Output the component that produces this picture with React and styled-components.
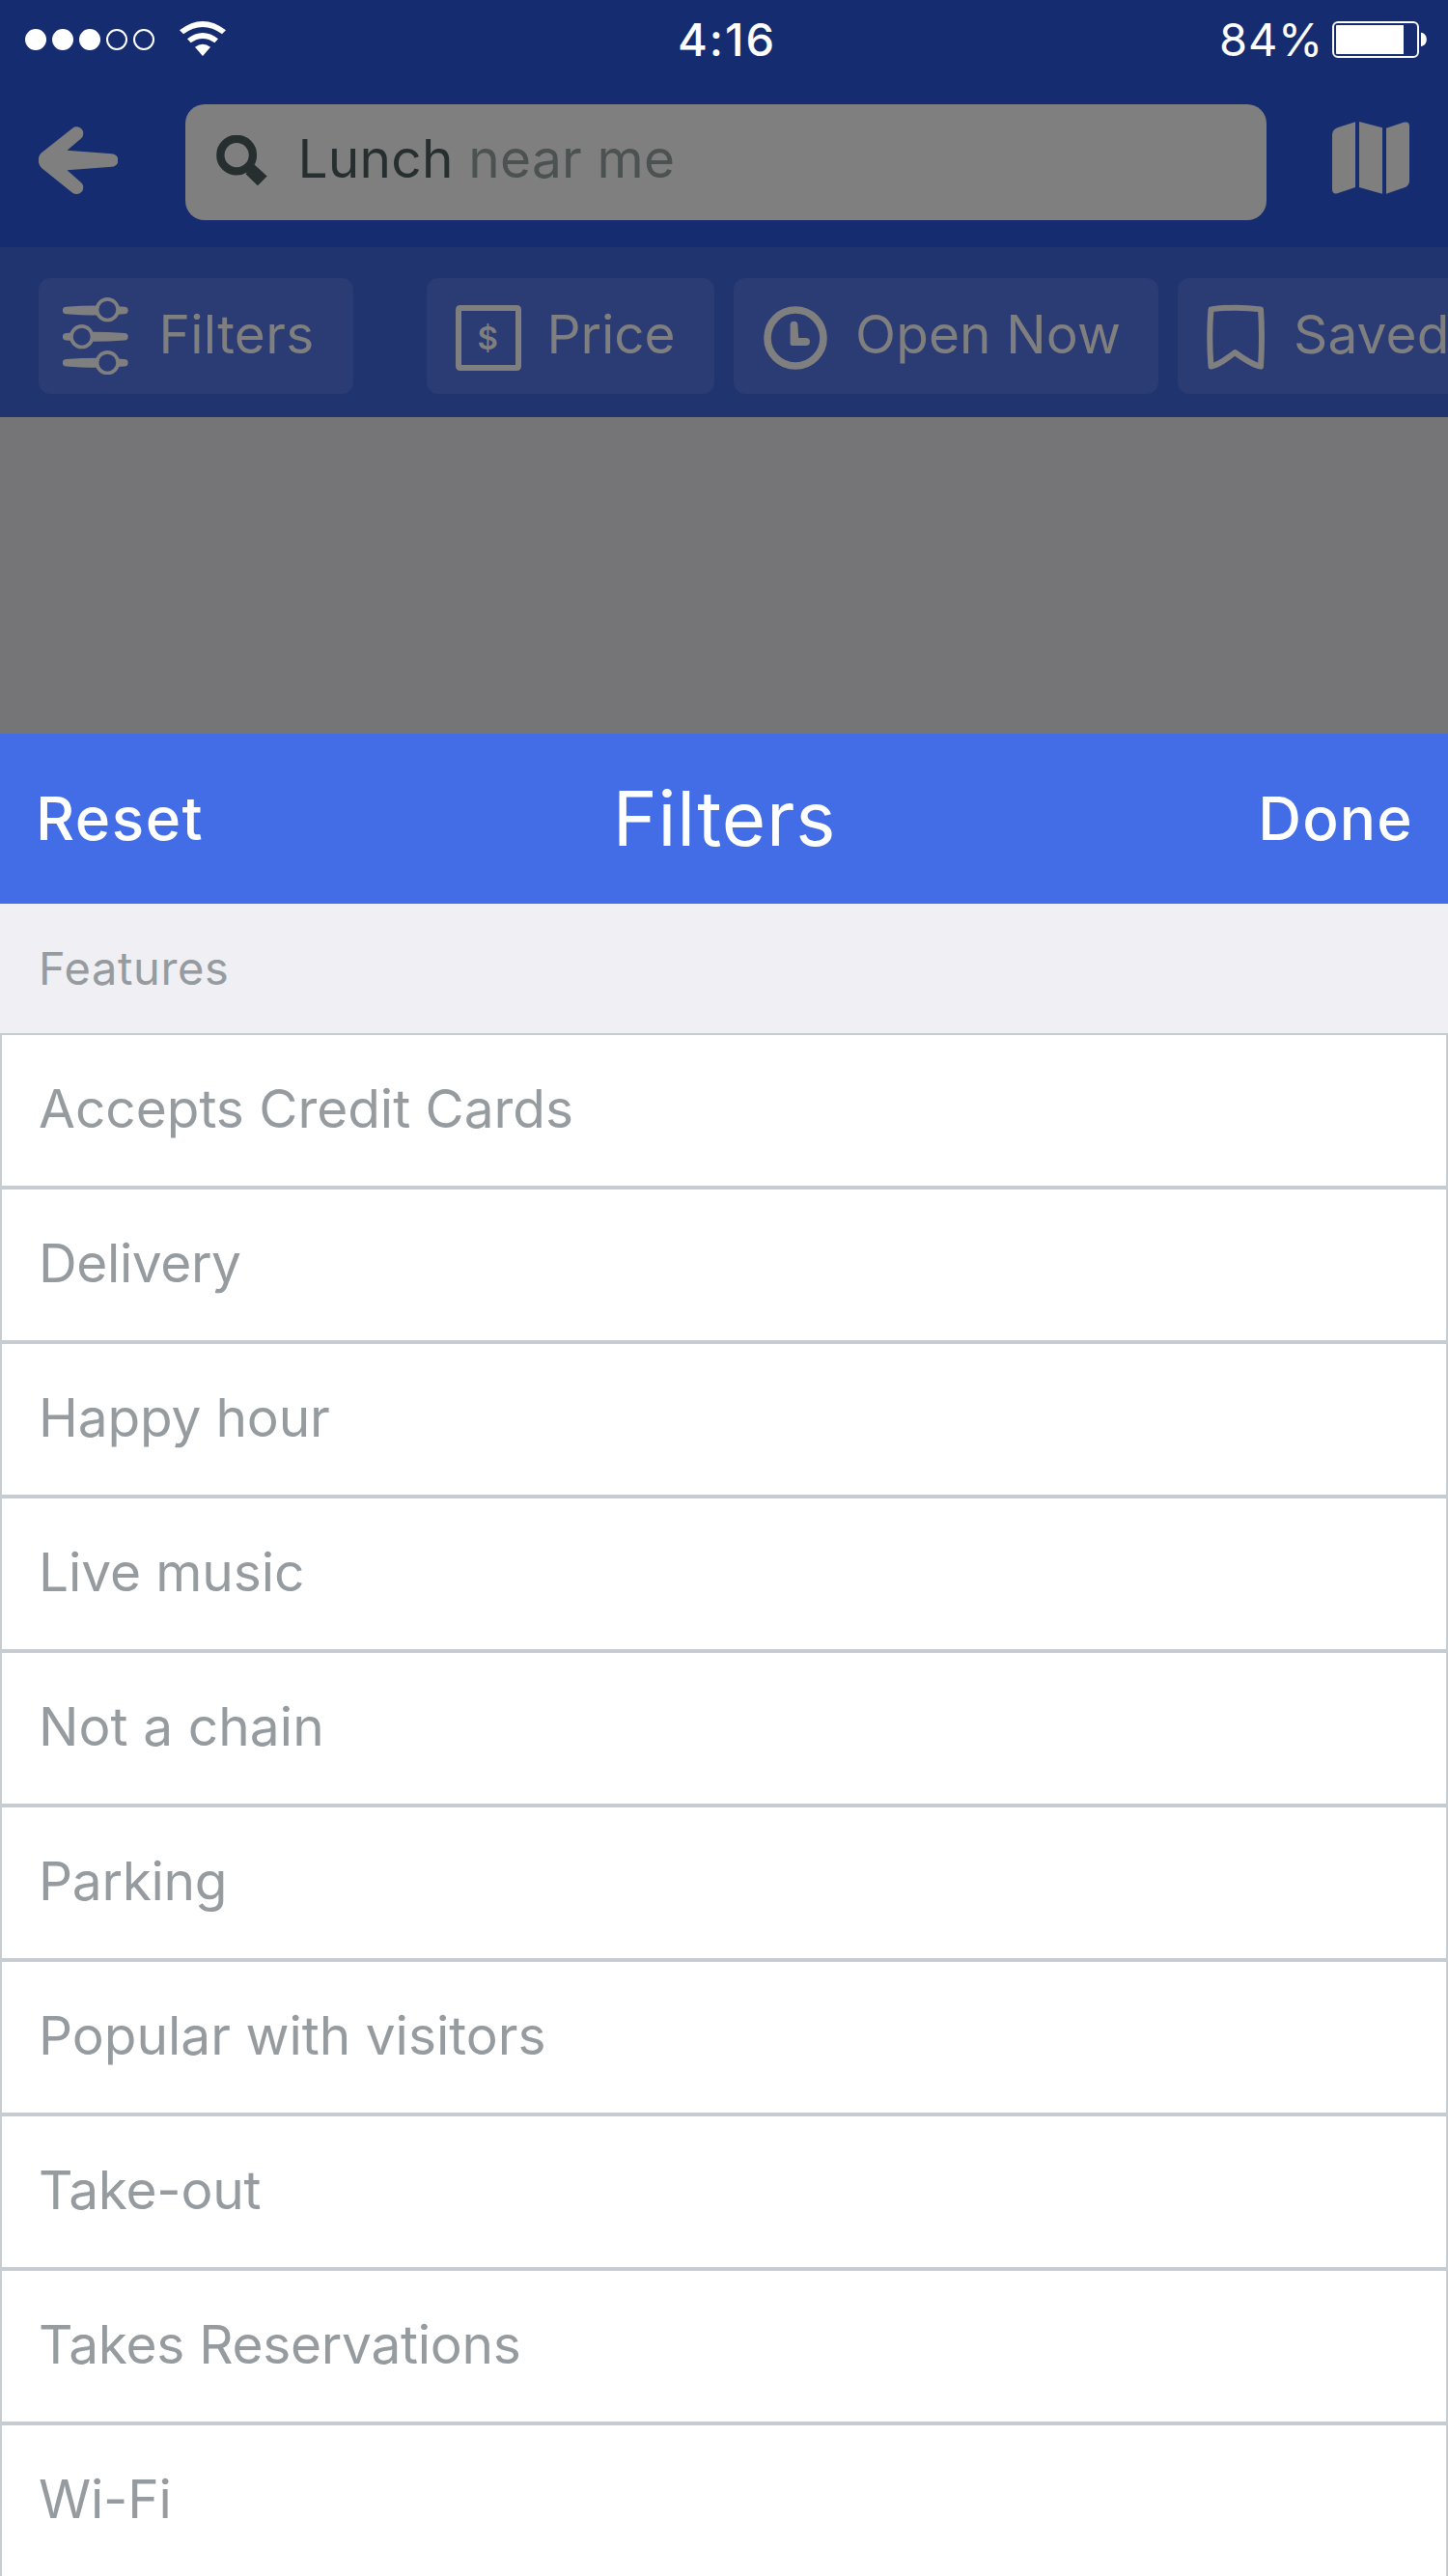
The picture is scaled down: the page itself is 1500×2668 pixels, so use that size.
import React from "react";
import styled, { createGlobalStyle } from "styled-components";

const color = {
  navy: "#162c70",
  navySoft: "#203470",
  chip: "#2b3b74",
  dimmed: "#7f7f7f",
  backdrop: "#757577",
  ink: "#272e2f",
  inkSoft: "#4c5251",
  primary: "#426de6",
  section: "#efeff4",
  label: "#959b9f",
  line: "#c6cccf",
};

const GlobalStyle = createGlobalStyle`
  *, *::before, *::after { box-sizing: border-box; }
  body { margin: 0; background: ${color.backdrop}; }
  button { font: inherit; color: inherit; border: 0; padding: 0; background: none; }
`;

const Screen = styled.div`
  width: 1500px;
  height: 2668px;
  overflow: hidden;
  display: flex;
  flex-direction: column;
  background: ${color.backdrop};
  font-family: Inter, "Liberation Sans", sans-serif;
`;

const Text = styled.span`
  font-size: ${(p) => p.$size || 55}px;
  font-weight: ${(p) => p.$weight || 400};
  letter-spacing: ${(p) => p.$tracking || 0}px;
  line-height: 1.2;
  white-space: pre;
`;

/* ---------- status bar ---------- */

const StatusBar = styled.div`
  flex: none;
  height: 82px;
  display: grid;
  grid-template-columns: 1fr auto 1fr;
  align-items: center;
  padding: 0 22px 0 26px;
  background: ${color.navy};
  color: #fff;
`;

const StatusLeft = styled.div`
  display: flex;
  align-items: center;
  gap: 26px;
`;

const Signal = styled.div`
  display: flex;
  gap: 6px;
`;

const Dot = styled.span`
  width: 22px;
  height: 22px;
  border-radius: 50%;
  border: 2px solid #fff;
  background: ${(p) => (p.$on ? "#fff" : "transparent")};
`;

const Clock = styled(Text)`
  padding-left: 2px;
`;

const WifiSvg = styled.svg`
  display: block;
  margin-bottom: 2px;
`;

const StatusRight = styled.div`
  display: flex;
  align-items: center;
  justify-content: flex-end;
  gap: 9px;
`;

/* ---------- search header ---------- */

const SearchHeader = styled.div`
  flex: none;
  height: 174px;
  display: flex;
  align-items: flex-start;
  padding: 26px 40px 0;
  background: ${color.navy};
`;

const IconButton = styled.button`
  display: flex;
  margin-top: ${(p) => p.$top}px;
`;

const SearchField = styled.div`
  width: 1120px;
  height: 120px;
  margin: 0 68px 0 70px;
  padding: 0 32px 8px;
  display: flex;
  align-items: center;
  gap: 31.5px;
  border-radius: 20px;
  background: ${color.dimmed};
  color: ${color.ink};
`;

const SearchSvg = styled.svg`
  flex: none;
  margin-top: 4px;
`;

const Soft = styled.span`
  color: ${color.inkSoft};
`;

/* ---------- filter chips ---------- */

const ChipBar = styled.div`
  flex: none;
  height: 176px;
  padding: 32px 0 0 40px;
  display: flex;
  align-items: flex-start;
  gap: 20px;
  overflow: hidden;
  background: ${color.navySoft};
`;

const Chip = styled.button`
  flex: none;
  width: ${(p) => p.$width}px;
  height: 120px;
  margin-right: ${(p) => (p.$lead ? 56 : 0)}px;
  padding-left: 25px;
  display: flex;
  align-items: center;
  gap: ${(p) => p.$gap}px;
  border-radius: 12px;
  background: ${color.chip};
  color: ${color.dimmed};
`;

const ChipText = styled(Text)`
  padding-bottom: 4px;
`;

const ChipSvg = styled.svg`
  flex: none;
  display: block;
`;

/* ---------- panel ---------- */

const Backdrop = styled.div`
  flex: none;
  height: 328px;
`;

const PanelHeader = styled.div`
  flex: none;
  height: 176px;
  padding: 0 36px 0 37px;
  display: grid;
  grid-template-columns: 1fr auto 1fr;
  align-items: center;
  background: ${color.primary};
  color: #fff;
`;

const Action = styled.button`
  justify-self: ${(p) => (p.$end ? "end" : "start")};
`;

const SectionTitle = styled.div`
  flex: none;
  height: 134px;
  padding-left: 40px;
  display: flex;
  align-items: center;
  background: ${color.section};
  color: ${color.label};
`;

const List = styled.div`
  flex: none;
  display: flex;
  flex-direction: column;
`;

const Row = styled.div`
  height: 160px;
  padding: 0 38px 4px;
  display: flex;
  align-items: center;
  border: 2px solid ${color.line};
  background: #fff;
  color: ${color.label};
`;

/* ---------- drawings ---------- */

const WifiIcon = () => (
  <WifiSvg width="48" height="36" viewBox="558 66 144 108" fill="#fff">
    <path d="M558 94Q630 38 702 94L690 106Q630 62 570 106Z" />
    <path d="M582 121Q630 83 678 121L667 133Q630 107 593 133Z" />
    <path d="M606 146Q630 128 654 146L630 174Z" />
  </WifiSvg>
);

const BatteryIcon = () => (
  <svg width="98" height="38" viewBox="0 0 98 38">
    <rect x="1" y="1" width="88" height="36" rx="5" fill="none" stroke="#fff" strokeWidth="2" />
    <path d="M5 4H74V34H5Q4 34 4 33V5Q4 4 5 4Z" fill="#fff" />
    <path d="M92 11.7C99.8 12.4 99.8 25.3 92 26Z" fill="#fff" />
  </svg>
);

const BackIcon = () => (
  <svg width="82" height="72" viewBox="120 389 247 215" fill={color.dimmed}>
    <path d="M128 474L226 396A21 21 0 0 1 254 427L209 466L348 476A20.5 20.5 0 0 1 348 517L209 527L254 567A21 21 0 0 1 226 598L130 521C116 508 116 487 128 474Z" />
  </svg>
);

const SearchIcon = () => (
  <SearchSvg width="53" height="53" viewBox="672 420 158 158">
    <circle cx="735" cy="481.5" r="50" fill="none" stroke={color.ink} strokeWidth="25" />
    <path d="M790 511L829 547L800 576L763 540Z" fill={color.ink} />
  </SearchSvg>
);

const MapIcon = () => (
  <svg width="80" height="75" viewBox="1140 378 240 225" fill={color.dimmed}>
    <path d="M1140 418Q1141 403 1156 397L1212 379V582L1156 601Q1140 604 1140 588Z" />
    <path d="M1224 378L1296 397V602L1224 582Z" />
    <path d="M1308 398L1362 380Q1380 376 1380 391V563Q1379 577 1364 583L1308 602Z" />
  </svg>
);

const SlidersIcon = () => (
  <ChipSvg width="76" height="80" viewBox="0 0 76 80" fill="currentColor">
    {[[12.7, 13.5, 46.3], [67.7, 67.7, 46.3]].map(([cy, y, cx]) => (
      <g key={cy} transform={`translate(0 ${y})`}>
        <path d="M3.6 -3.7Q18 -5 36 -5V5Q18 5 3.6 3.7A3.7 3.7 0 0 1 3.6 -3.7Z" />
        <path d="M57 -4.3L64 -3.7A3.7 3.7 0 0 1 64 3.7L57 4.3Z" />
        <circle cx={cx} cy={cy - y} r="10.8" fill={color.chip} stroke="currentColor" strokeWidth="3.7" />
      </g>
    ))}
    <g transform="translate(0 40.7)">
      <path d="M64 -3.7Q48 -5 30 -5V5Q48 5 64 3.7A3.7 3.7 0 0 0 64 -3.7Z" />
      <path d="M9 -4.3L3.6 -3.7A3.7 3.7 0 0 0 3.6 3.7L9 4.3Z" />
      <circle cx="19.7" cy="0" r="10.8" fill={color.chip} stroke="currentColor" strokeWidth="3.7" />
    </g>
  </ChipSvg>
);

const PriceIcon = () => (
  <ChipSvg width="76" height="80" viewBox="0 0 76 80">
    <path
      d="M10 8H68Q73 8 73 13V71Q73 76 68 76H10Q5 76 5 71V13Q5 8 10 8ZM11 14V70H67V14Z"
      fill="currentColor"
      fillRule="evenodd"
    />
    <text x="38.2" y="54" fontSize="33" fontWeight="600" textAnchor="middle" fill="currentColor">$</text>
  </ChipSvg>
);

const ClockIcon = () => (
  <ChipSvg width="77" height="80" viewBox="0 0 77 80">
    <circle cx="39" cy="42" r="29" fill="none" stroke="currentColor" strokeWidth="7.6" />
    <path
      d="M33.6 28.6A3.9 3.9 0 0 1 41.4 28.6L42.2 42H50A4 4 0 0 1 50 50H35.6Q33.6 50 33.6 48Z"
      fill="currentColor"
    />
  </ChipSvg>
);

const BookmarkIcon = () => (
  <ChipSvg width="71" height="80" viewBox="0 0 71 80">
    <path
      d="M9.5 12.4Q35 9 61 12.4Q63 40 61 71.5Q52 70 34.3 57Q18 70 9.5 71.5Q7 40 9.5 12.4Z"
      fill="none"
      stroke="currentColor"
      strokeWidth="6"
      strokeLinejoin="round"
    />
  </ChipSvg>
);

/* ---------- data ---------- */

const chips = [
  { label: "Filters", width: 326, Icon: SlidersIcon, gap: 23.5, tracking: 0.25, lead: true },
  { label: "Price", width: 298, Icon: PriceIcon, gap: 23.5, tracking: -0.1 },
  { label: "Open Now", width: 440, Icon: ClockIcon, gap: 24, tracking: 0.1 },
  { label: "Saved", width: 312, Icon: BookmarkIcon, gap: 24, tracking: 0.1 },
];

const features = [
  ["Accepts Credit Cards", -0.03],
  ["Delivery", -0.4],
  ["Happy hour", -0.16],
  ["Live music", -0.1],
  ["Not a chain", 0.08],
  ["Parking", -0.3],
  ["Popular with visitors", 0],
  ["Take-out", -0.25],
  ["Takes Reservations", -0.28],
  ["Wi-Fi", -0.2],
];

export default function App() {
  return (
    <Screen>
      <GlobalStyle />
      <StatusBar>
        <StatusLeft>
          <Signal>
            {[true, true, true, false, false].map((on, i) => (
              <Dot key={i} $on={on} />
            ))}
          </Signal>
          <WifiIcon />
        </StatusLeft>
        <Clock $size={47} $weight={500} $tracking={2}>4:16</Clock>
        <StatusRight>
          <Text $size={47} $tracking={0.8}>84%</Text>
          <BatteryIcon />
        </StatusRight>
      </StatusBar>

      <SearchHeader>
        <IconButton $top={21.5} aria-label="Back">
          <BackIcon />
        </IconButton>
        <SearchField>
          <SearchIcon />
          <Text $tracking={0.22}>
            Lunch <Soft>near me</Soft>
          </Text>
        </SearchField>
        <IconButton $top={18} aria-label="Map">
          <MapIcon />
        </IconButton>
      </SearchHeader>

      <ChipBar>
        {chips.map(({ label, width, Icon, gap, tracking, lead }) => (
          <Chip key={label} $width={width} $gap={gap} $lead={lead}>
            <Icon />
            <ChipText $tracking={tracking}>{label}</ChipText>
          </Chip>
        ))}
      </ChipBar>

      <Backdrop />

      <PanelHeader>
        <Action>
          <Text $size={62} $weight={540} $tracking={1.5}>Reset</Text>
        </Action>
        <Text $size={78} $tracking={0.82}>Filters</Text>
        <Action $end>
          <Text $size={62} $weight={540} $tracking={1.2}>Done</Text>
        </Action>
      </PanelHeader>
      <SectionTitle>
        <Text $size={47} $tracking={0.63}>Features</Text>
      </SectionTitle>
      <List>
        {features.map(([label, tracking]) => (
          <Row key={label}>
            <Text $tracking={tracking}>{label}</Text>
          </Row>
        ))}
      </List>
    </Screen>
  );
}
